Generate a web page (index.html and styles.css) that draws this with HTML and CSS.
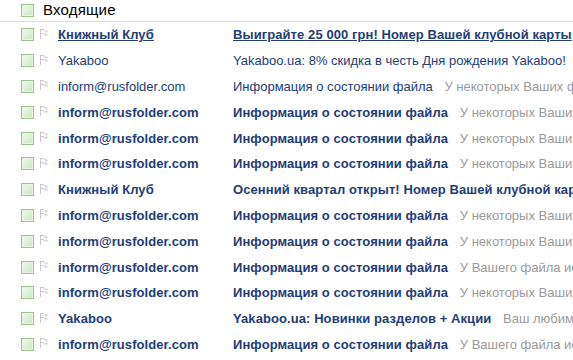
FILE: index.html
```html
<!DOCTYPE html>
<html>
  <head>
    <title>Входящие</title>
    <link rel="stylesheet" href="styles.css">
  </head>
  <body>
    <div class="head">
      <span class="box"></span>
      <span class="title">Входящие</span>
    </div>
    <div class="list">
      <div class="row unread hover">
        <span class="box"></span>
        <svg class="flag" width="8" height="10" viewBox="0 0 8 10"><path d="M0.5 0v10M0.5 0.5h3l1 1.5h3l-2 2 2 2h-3l-1-1.5h-3" fill="none" stroke="#c8c8c8" stroke-width="1"/></svg>
        <span class="from">Книжный Клуб</span>
        <span class="subj">Выиграйте 25 000 грн! Номер Вашей клубной карты</span>
      </div>
      <div class="row">
        <span class="box"></span>
        <svg class="flag" width="8" height="10" viewBox="0 0 8 10"><path d="M0.5 0v10M0.5 0.5h3l1 1.5h3l-2 2 2 2h-3l-1-1.5h-3" fill="none" stroke="#c8c8c8" stroke-width="1"/></svg>
        <span class="from">Yakaboo</span>
        <span class="subj">Yakaboo.ua: 8% скидка в честь Дня рождения Yakaboo!</span>
      </div>
      <div class="row">
        <span class="box"></span>
        <svg class="flag" width="8" height="10" viewBox="0 0 8 10"><path d="M0.5 0v10M0.5 0.5h3l1 1.5h3l-2 2 2 2h-3l-1-1.5h-3" fill="none" stroke="#c8c8c8" stroke-width="1"/></svg>
        <span class="from">inform@rusfolder.com</span>
        <span class="subj">Информация о состоянии файла <span class="snip">У некоторых Ваших файлов</span></span>
      </div>
      <div class="row unread">
        <span class="box"></span>
        <svg class="flag" width="8" height="10" viewBox="0 0 8 10"><path d="M0.5 0v10M0.5 0.5h3l1 1.5h3l-2 2 2 2h-3l-1-1.5h-3" fill="none" stroke="#c8c8c8" stroke-width="1"/></svg>
        <span class="from">inform@rusfolder.com</span>
        <span class="subj">Информация о состоянии файла <span class="snip">У некоторых Ваших файлов</span></span>
      </div>
      <div class="row unread">
        <span class="box"></span>
        <svg class="flag" width="8" height="10" viewBox="0 0 8 10"><path d="M0.5 0v10M0.5 0.5h3l1 1.5h3l-2 2 2 2h-3l-1-1.5h-3" fill="none" stroke="#c8c8c8" stroke-width="1"/></svg>
        <span class="from">inform@rusfolder.com</span>
        <span class="subj">Информация о состоянии файла <span class="snip">У некоторых Ваших файлов</span></span>
      </div>
      <div class="row unread">
        <span class="box"></span>
        <svg class="flag" width="8" height="10" viewBox="0 0 8 10"><path d="M0.5 0v10M0.5 0.5h3l1 1.5h3l-2 2 2 2h-3l-1-1.5h-3" fill="none" stroke="#c8c8c8" stroke-width="1"/></svg>
        <span class="from">inform@rusfolder.com</span>
        <span class="subj">Информация о состоянии файла <span class="snip">У некоторых Ваших файлов</span></span>
      </div>
      <div class="row unread">
        <span class="box"></span>
        <svg class="flag" width="8" height="10" viewBox="0 0 8 10"><path d="M0.5 0v10M0.5 0.5h3l1 1.5h3l-2 2 2 2h-3l-1-1.5h-3" fill="none" stroke="#c8c8c8" stroke-width="1"/></svg>
        <span class="from">Книжный Клуб</span>
        <span class="subj">Осенний квартал открыт! Номер Вашей клубной карты</span>
      </div>
      <div class="row unread">
        <span class="box"></span>
        <svg class="flag" width="8" height="10" viewBox="0 0 8 10"><path d="M0.5 0v10M0.5 0.5h3l1 1.5h3l-2 2 2 2h-3l-1-1.5h-3" fill="none" stroke="#c8c8c8" stroke-width="1"/></svg>
        <span class="from">inform@rusfolder.com</span>
        <span class="subj">Информация о состоянии файла <span class="snip">У некоторых Ваших файлов</span></span>
      </div>
      <div class="row unread">
        <span class="box"></span>
        <svg class="flag" width="8" height="10" viewBox="0 0 8 10"><path d="M0.5 0v10M0.5 0.5h3l1 1.5h3l-2 2 2 2h-3l-1-1.5h-3" fill="none" stroke="#c8c8c8" stroke-width="1"/></svg>
        <span class="from">inform@rusfolder.com</span>
        <span class="subj">Информация о состоянии файла <span class="snip">У некоторых Ваших файлов</span></span>
      </div>
      <div class="row unread">
        <span class="box"></span>
        <svg class="flag" width="8" height="10" viewBox="0 0 8 10"><path d="M0.5 0v10M0.5 0.5h3l1 1.5h3l-2 2 2 2h-3l-1-1.5h-3" fill="none" stroke="#c8c8c8" stroke-width="1"/></svg>
        <span class="from">inform@rusfolder.com</span>
        <span class="subj">Информация о состоянии файла <span class="snip">У Вашего файла истекает</span></span>
      </div>
      <div class="row unread">
        <span class="box"></span>
        <svg class="flag" width="8" height="10" viewBox="0 0 8 10"><path d="M0.5 0v10M0.5 0.5h3l1 1.5h3l-2 2 2 2h-3l-1-1.5h-3" fill="none" stroke="#c8c8c8" stroke-width="1"/></svg>
        <span class="from">inform@rusfolder.com</span>
        <span class="subj">Информация о состоянии файла <span class="snip">У некоторых Ваших файлов</span></span>
      </div>
      <div class="row unread">
        <span class="box"></span>
        <svg class="flag" width="8" height="10" viewBox="0 0 8 10"><path d="M0.5 0v10M0.5 0.5h3l1 1.5h3l-2 2 2 2h-3l-1-1.5h-3" fill="none" stroke="#c8c8c8" stroke-width="1"/></svg>
        <span class="from">Yakaboo</span>
        <span class="subj">Yakaboo.ua: Новинки разделов + Акции <span class="snip">Ваш любимый магазин</span></span>
      </div>
      <div class="row unread">
        <span class="box"></span>
        <svg class="flag" width="8" height="10" viewBox="0 0 8 10"><path d="M0.5 0v10M0.5 0.5h3l1 1.5h3l-2 2 2 2h-3l-1-1.5h-3" fill="none" stroke="#c8c8c8" stroke-width="1"/></svg>
        <span class="from">inform@rusfolder.com</span>
        <span class="subj">Информация о состоянии файла <span class="snip">У Вашего файла истекает</span></span>
      </div>
    </div>
  </body>
</html>
```
FILE: styles.css
```css
body {
  margin: 0;
  padding: 0;
  background: #fff;
  font-family: "Liberation Sans", Arial, sans-serif;
  overflow: hidden;
}

.box {
  display: inline-block;
  flex: none;
  width: 11px;
  height: 11px;
  border: 1px solid #9cc38e;
  background: linear-gradient(135deg, #f2faef, #c9e4c0);
  box-shadow: inset 0 0 0 1px #e8f4e4;
}

.head {
  display: flex;
  align-items: center;
  height: 21px;
  padding-left: 21px;
  border-bottom: 1px solid #dcdcdc;
}

.head .box {
  margin-top: -1px;
}

.title {
  margin-left: 9px;
  margin-top: -3px;
  font-size: 15px;
  letter-spacing: 0.2px;
  color: #000;
}

.row {
  display: flex;
  align-items: center;
  height: 25.8px;
  padding-left: 21px;
  font-size: 13px;
  color: #223d74;
  white-space: nowrap;
}

.flag {
  flex: none;
  margin-left: 6px;
  margin-top: -2px;
}

.from {
  flex: none;
  width: 175px;
  margin-left: 10px;
}

.subj {
  overflow: hidden;
}

.snip {
  margin-left: 8px;
  color: #9a9a9a;
  font-weight: normal;
  letter-spacing: 0;
}

.unread .from,
.unread .subj {
  font-weight: bold;
  letter-spacing: 0.08px;
}

.hover .from,
.hover .subj {
  text-decoration: underline;
}
```
